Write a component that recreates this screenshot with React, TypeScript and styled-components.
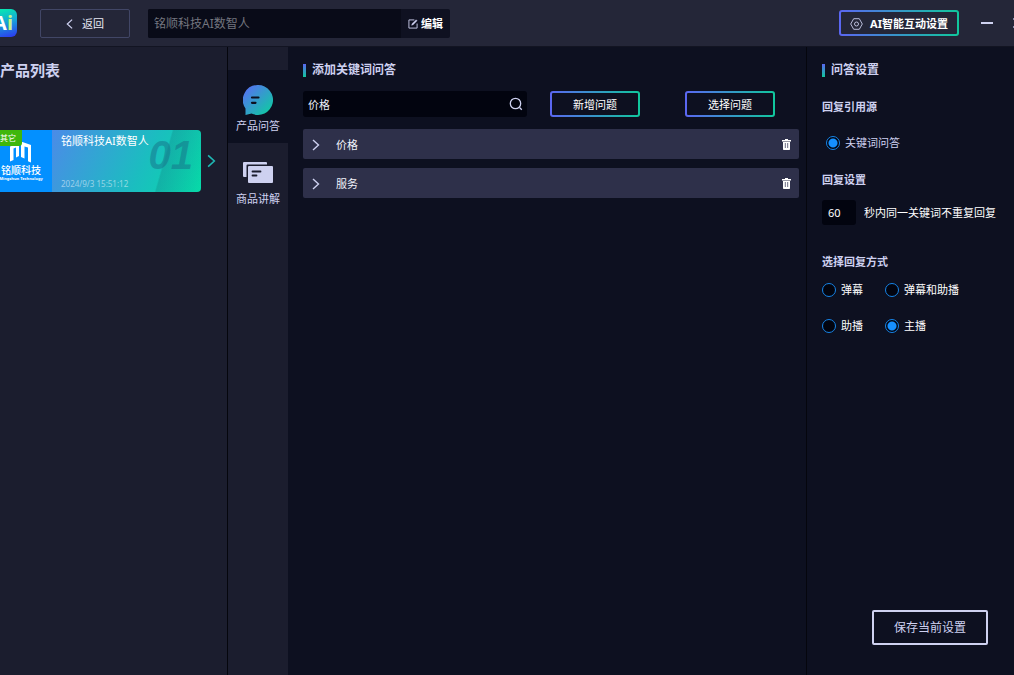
import React, { useState } from "react";
import styled, { createGlobalStyle, css } from "styled-components";

const GlobalStyle = createGlobalStyle`
  *, *::before, *::after { box-sizing: border-box; }
  body {
    margin: 0;
    background: #0d1020;
    color: #ced1f0;
    font-family: "Noto Sans", "Noto Sans CJK SC", sans-serif;
    font-size: 11px;
    line-height: 16px;
  }
  button, input { font: inherit; color: inherit; margin: 0; }
  button { cursor: pointer; padding: 0; }
  h1, h2, h3, p, ul { margin: 0; padding: 0; }
  ul { list-style: none; }
`;

const App = styled.div`
  display: flex;
  flex-direction: column;
  min-height: 100vh;
  overflow: hidden;
`;

const Header = styled.header`
  display: flex;
  align-items: center;
  height: 47px;
  background: #242638;
  border-bottom: 1px solid #121422;
`;

const Logo = styled.div`
  display: flex;
  justify-content: flex-end;
  align-items: center;
  width: 17px;
  height: 28px;
  padding-right: 4px;
  overflow: hidden;
  border-radius: 0 6px 6px 0;
  background: linear-gradient(165deg, #08e3b4 5%, #16a5d8 45%, #2b3df0 95%);
  color: #fff;
  font: 700 20px/28px "Open Sans", sans-serif;

  span { color: #c5f58a; }
`;

const BackButton = styled.button`
  display: flex;
  align-items: center;
  justify-content: center;
  gap: 9px;
  width: 90px;
  height: 29px;
  margin-left: 23px;
  padding-top: 1px;
  border: 1px solid #414666;
  border-radius: 2px;
  background: transparent;
  color: #e8e9f5;
`;

const NameBox = styled.div`
  display: flex;
  width: 302px;
  height: 29px;
  margin-left: 18px;
  border-radius: 2px;
  overflow: hidden;
  background: #0f1121;
`;

const NameInput = styled.input`
  flex: 1;
  min-width: 0;
  padding: 2px 6px 0;
  border: 0;
  outline: 0;
  background: #090b18;
  color: #73757f;
  font-size: 12px;
`;

const EditButton = styled.button`
  display: flex;
  align-items: center;
  justify-content: center;
  gap: 3px;
  width: 49px;
  padding-top: 1px;
  border: 0;
  background: transparent;
  color: #fff;
  font-weight: 700;
`;

const GradientButton = styled.button<{ $w: number; $bg: string; $bold?: boolean }>`
  display: flex;
  align-items: center;
  justify-content: center;
  gap: 7px;
  width: ${(p) => p.$w}px;
  height: 26px;
  padding-top: 1px;
  border: 2px solid transparent;
  border-radius: 3px;
  background:
    linear-gradient(${(p) => p.$bg}, ${(p) => p.$bg}) padding-box,
    linear-gradient(90deg, #5b66f2, #10c79c) border-box;
  color: #fff;
  font-weight: ${(p) => (p.$bold ? 700 : 400)};
`;

const WindowTools = styled.div`
  display: flex;
  align-items: center;
  margin-left: auto;
`;

const WindowButton = styled.button<{ $w: number; $gap: number }>`
  display: flex;
  width: ${(p) => p.$w}px;
  margin-left: ${(p) => p.$gap}px;
  border: 0;
  overflow: hidden;
  background: transparent;
`;

const Body = styled.div`
  display: flex;
  flex: 1;
`;

const Products = styled.aside`
  width: 228px;
  padding-top: 13px;
  border-right: 1px solid #05060d;
  background: #1b1d2e;
`;

const ProductsTitle = styled.h1`
  font-size: 15px;
  line-height: 20px;
`;

const ProductRow = styled.div`
  display: flex;
  align-items: center;
  gap: 6px;
  margin-top: 50px;
`;

const Card = styled.article`
  display: flex;
  position: relative;
  width: 201px;
  height: 62px;
  overflow: hidden;
  border-radius: 0 4px 4px 0;
`;

const Brand = styled.div`
  display: flex;
  flex-direction: column;
  align-items: center;
  width: 52px;
  padding: 11px 10px 0 0;
  background: #0390ff;
  color: #fff;
`;

const BrandName = styled.strong`
  font-size: 10px;
  line-height: 12px;
  margin-top: 1px;
  font-weight: 500;
`;

const BrandSub = styled.small`
  font-size: 4px;
  line-height: 6px;
  font-weight: 700;
  white-space: nowrap;
`;

const Tag = styled.span`
  position: absolute;
  left: 0;
  top: 0;
  width: 22px;
  border-radius: 0 0 3px 0;
  background: #3fb70c;
  color: #fff;
  font-size: 8px;
  line-height: 16px;
  white-space: nowrap;
`;

const CardInfo = styled.div`
  display: flex;
  flex: 1;
  flex-direction: column;
  justify-content: space-between;
  padding: 3px 0 2px 9px;
  background:
    linear-gradient(106deg, transparent 72%, rgba(16, 130, 130, 0.32) 73%, rgba(16, 130, 130, 0) 100%),
    linear-gradient(115deg, #4b8be8, #1bbdc0 60%, #06dca8);
  color: #fff;
`;

const CardDate = styled.time`
  font-size: 8px;
  line-height: 12px;
  color: rgba(255, 255, 255, 0.5);
`;

const CardNumber = styled.span`
  position: absolute;
  right: 8px;
  top: 4px;
  font: italic 700 40px/42px "Liberation Sans", sans-serif;
  color: rgba(22, 112, 136, 0.5);
`;

const Nav = styled.nav`
  width: 60px;
  padding-top: 23px;
  background: #1b1d2e;
`;

const NavItem = styled.button<{ $active?: boolean }>`
  display: flex;
  flex-direction: column;
  align-items: center;
  justify-content: flex-end;
  gap: 3px;
  width: 100%;
  height: 73px;
  padding-bottom: 9px;
  border: 0;
  background: ${(p) => (p.$active ? "#0d1020" : "transparent")};
  white-space: nowrap;
`;

const Main = styled.main`
  flex: 1;
  min-width: 0;
  padding: 14px 7px 0 15px;
  border-right: 1px solid #05060d;
`;

const SectionTitle = styled.h2`
  display: flex;
  align-items: center;
  gap: 6px;
  font-size: 12px;
  line-height: 18px;
  font-weight: 600;

  &::before {
    content: "";
    width: 3px;
    height: 13px;
    background: linear-gradient(#5b66f2, #10c79c);
  }
`;

const Toolbar = styled.div`
  display: flex;
  margin-top: 12px;
`;

const Search = styled.label`
  display: flex;
  align-items: center;
  width: 224px;
  height: 26px;
  margin-right: 23px;
  padding: 0 4px 0 5px;
  border-radius: 3px;
  background: #02040f;
  color: #eceef8;

  input {
    flex: 1;
    min-width: 0;
    padding: 1px 0 0;
    border: 0;
    outline: 0;
    background: transparent;
  }
`;

const ToolbarActions = styled.div`
  display: flex;
  gap: 45px;
`;

const Questions = styled.ul`
  display: grid;
  gap: 9px;
  margin-top: 12px;
`;

const Question = styled.li`
  display: flex;
  align-items: center;
  height: 30px;
  padding: 1px 8px 0 9px;
  border-radius: 2px;
  background: #2e304a;
  color: #f2f3fa;
`;

const Expand = styled.button`
  display: flex;
  align-items: center;
  flex: 1;
  gap: 16px;
  border: 0;
  background: transparent;
`;

const IconButton = styled.button`
  display: flex;
  border: 0;
  background: transparent;
`;

const Settings = styled.aside`
  display: flex;
  flex-direction: column;
  width: 207px;
  padding: 14px 15px 30px;
`;

const GroupTitle = styled.h3<{ $top: number }>`
  margin-top: ${(p) => p.$top}px;
  font-size: 11px;
  font-weight: 600;
`;

const circle = css`
  appearance: none;
  width: 14px;
  height: 14px;
  border: 1px solid #1684e8;
  border-radius: 50%;
  background: #02040f;
`;

const RadioLabel = styled.label<{ $light?: boolean }>`
  display: flex;
  align-items: center;
  gap: 5px;
  color: ${(p) => (p.$light ? "#fff" : "inherit")};
  white-space: nowrap;

  input { ${circle} }
  input:checked {
    background: radial-gradient(circle, #1690ff 0 4px, #02040f 5px);
  }
`;

const Source = styled.div`
  margin-top: 20px;
  padding-left: 4px;
`;

const Interval = styled.label`
  display: flex;
  align-items: center;
  gap: 8px;
  margin-top: 12px;
  color: #fff;
  white-space: nowrap;

  input {
    width: 34px;
    height: 25px;
    padding: 0 6px;
    border: 0;
    border-radius: 3px;
    background: #02040f;
  }
`;

const Modes = styled.div`
  display: grid;
  grid-template-columns: 63px 1fr;
  row-gap: 20px;
  margin-top: 12px;
`;

const SaveButton = styled.button`
  align-self: flex-end;
  width: 116px;
  height: 35px;
  margin: auto 11px 0 0;
  border: 2px solid #ced1f0;
  border-radius: 2px;
  background: transparent;
  font-size: 12px;
`;

const Chevron = ({ left = false, color = "#ced1f0", w = 8, h = 12 }) => (
  <svg width={w} height={h} viewBox="0 0 8 12" fill="none" stroke={color} strokeWidth="1.4" aria-hidden="true">
    <path d={left ? "M7 1 1.5 6 7 11" : "M1 1l5.5 5L1 11"} />
  </svg>
);

const TrashIcon = () => (
  <svg width="9" height="11" viewBox="0 0 9 11" aria-hidden="true">
    <path d="M3 0h3v1h3v1.5H0V1h3z" fill="#fff" />
    <path d="M1 3h7v7.2a.8.8 0 0 1-.8.8H1.8a.8.8 0 0 1-.8-.8z" fill="#fff" />
    <path d="M3.3 4v5M5.7 4v5" stroke="#5a5c76" strokeWidth=".9" />
  </svg>
);

const questions = ["价格", "服务"];
const modes = ["弹幕", "弹幕和助播", "助播", "主播"];

export default function LiveAssistant() {
  const [mode, setMode] = useState("主播");
  return (
    <App>
      <GlobalStyle />
      <Header>
        <Logo>A<span>i</span></Logo>
        <BackButton><Chevron left w={7} h={12} />返回</BackButton>
        <NameBox>
          <NameInput aria-label="名称" defaultValue="铭顺科技AI数智人" />
          <EditButton>
            <svg width="10" height="10" viewBox="0 0 11 11" fill="none" stroke="#ced1f0" aria-hidden="true">
              <path d="M7 1H1v9h9V5" />
              <path d="M4 7l.4-1.8L9 .8l1 1-4.300 4.600z" fill="#ced1f0" strokeWidth=".4" />
            </svg>
            编辑
          </EditButton>
        </NameBox>
        <WindowTools>
          <GradientButton $w={120} $bg="#242638" $bold>
            <svg width="13" height="12" viewBox="0 0 13 12" fill="none" stroke="#b9bcda" aria-hidden="true">
              <path d="M3.700.7h5.600L12.300 6l-3 5.300H3.700L.7 6z" strokeLinejoin="round" />
              <circle cx="6.500" cy="6" r="2" />
            </svg>
            AI智能互动设置
          </GradientButton>
          <WindowButton $w={12} $gap={22} aria-label="最小化">
            <svg width="12" height="2"><path d="M0 1h12" stroke="#ced1f0" strokeWidth="2" /></svg>
          </WindowButton>
          <WindowButton $w={1} $gap={20} aria-label="最大化">
            <svg width="10" height="10"><path d="M.5 0v2M.5 8v2" stroke="#8a8dab" /></svg>
          </WindowButton>
        </WindowTools>
      </Header>
      <Body>
        <Products>
          <ProductsTitle>产品列表</ProductsTitle>
          <ProductRow>
            <Card>
              <Brand>
                <svg width="22" height="22" viewBox="0 0 22 22" fill="#fff" aria-hidden="true">
                  <path d="M0 5.500 9 2.500V15l-3 1.500V6.500L3.500 7.500V19L0 20.500z" />
                  <path d="M11 .5 21 4v17.500l-3-1.200V6.500l-3.500-1V17.500L11 16z" />
                </svg>
                <BrandName>铭顺科技</BrandName>
                <BrandSub>Mingshun Technology</BrandSub>
              </Brand>
              <CardInfo>
                <span>铭顺科技AI数智人</span>
                <CardDate>2024/9/3 15:51:12</CardDate>
              </CardInfo>
              <CardNumber>01</CardNumber>
              <Tag>其它</Tag>
            </Card>
            <IconButton aria-label="展开"><Chevron color="#1fb8b4" w={9} h={14} /></IconButton>
          </ProductRow>
        </Products>
        <Nav>
          <NavItem $active>
            <svg width="30" height="30" viewBox="0 0 30 30" aria-hidden="true">
              <defs>
                <linearGradient id="bubble" x1="0" y1="0" x2="1" y2="1">
                  <stop offset=".1" stopColor="#5573f0" />
                  <stop offset=".9" stopColor="#10c9a4" />
                </linearGradient>
              </defs>
              <path d="M15 0a15 15 0 1 1-6.500 28.500L2.500 30V23.500A15 15 0 0 1 15 0z" fill="url(#bubble)" />
              <path d="M9 12.500h6.500M9 17.800h3.500" stroke="#0d1020" strokeWidth="2.200" strokeLinecap="round" />
            </svg>
            产品问答
          </NavItem>
          <NavItem>
            <svg width="30" height="28" viewBox="0 0 30 28" fill="#ced1f0" aria-hidden="true">
              <path d="M1 2h22a1 1 0 0 1 1 1v1.500H4.500a1 1 0 0 0-1 1V17H1a1 1 0 0 1-1-1V3a1 1 0 0 1 1-1z" />
              <rect x="5" y="6" width="25" height="17" rx="1" />
              <path d="M9.500 11.500h8M9.500 15.500h4" stroke="#1b1d2e" strokeWidth="1.800" strokeLinecap="round" />
            </svg>
            商品讲解
          </NavItem>
        </Nav>
        <Main>
          <SectionTitle>添加关键词问答</SectionTitle>
          <Toolbar>
            <Search>
              <input aria-label="搜索关键词" defaultValue="价格" />
              <svg width="14" height="14" viewBox="0 0 14 14" fill="none" stroke="#ced1f0" strokeWidth="1.300" aria-hidden="true">
                <circle cx="6.500" cy="6.500" r="5.200" />
                <path d="M10.500 10.500l2.300 2.300" />
              </svg>
            </Search>
            <ToolbarActions>
              <GradientButton $w={90} $bg="#0d1020">新增问题</GradientButton>
              <GradientButton $w={90} $bg="#0d1020">选择问题</GradientButton>
            </ToolbarActions>
          </Toolbar>
          <Questions>
            {questions.map((q) => (
              <Question key={q}>
                <Expand><Chevron />{q}</Expand>
                <IconButton aria-label={`删除${q}`}><TrashIcon /></IconButton>
              </Question>
            ))}
          </Questions>
        </Main>
        <Settings>
          <SectionTitle>问答设置</SectionTitle>
          <GroupTitle $top={20}>回复引用源</GroupTitle>
          <Source>
            <RadioLabel><input type="radio" name="source" defaultChecked />关键词问答</RadioLabel>
          </Source>
          <GroupTitle $top={21}>回复设置</GroupTitle>
          <Interval><input defaultValue="60" />秒内同一关键词不重复回复</Interval>
          <GroupTitle $top={29}>选择回复方式</GroupTitle>
          <Modes>
            {modes.map((m) => (
              <RadioLabel key={m} $light>
                <input type="radio" name="mode" checked={mode === m} onChange={() => setMode(m)} />
                {m}
              </RadioLabel>
            ))}
          </Modes>
          <SaveButton>保存当前设置</SaveButton>
        </Settings>
      </Body>
    </App>
  );
}
